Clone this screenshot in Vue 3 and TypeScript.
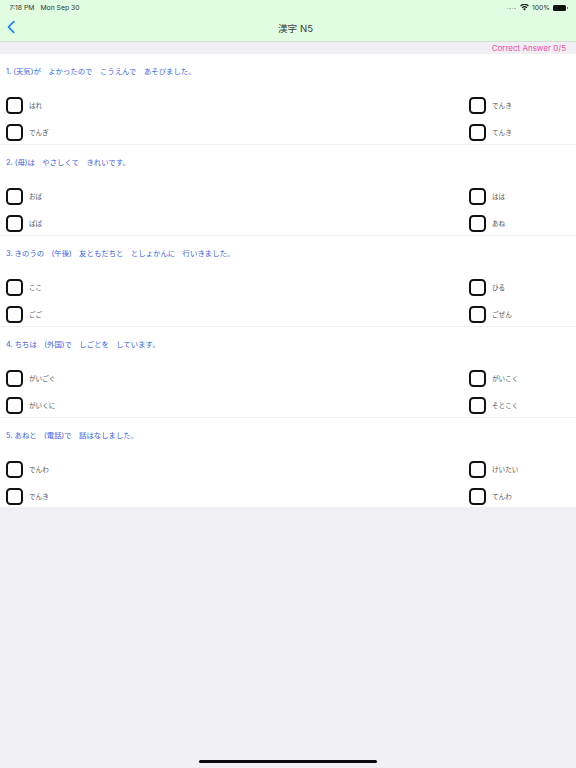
<script setup lang="ts">
interface Question {
  text: string
  options: string[]
}

const questions: Question[] = [
  { text: '1. (天気)が　よかったので　こうえんで　あそびました。', options: ['はれ', 'でんき', 'でんぎ', 'てんき'] },
  { text: '2. (母)は　やさしくて　きれいです。', options: ['おば', 'はは', 'ばば', 'あね'] },
  { text: '3. きのうの　(午後)　友ともだちと　としょかんに　行いきました。', options: ['ここ', 'ひる', 'ごご', 'ごぜん'] },
  { text: '4. ちちは　(外国)で　しごとを　しています。', options: ['がいごぐ', 'がいこく', 'がいくに', 'そとこく'] },
  { text: '5. あねと　(電話)で　話はなしました。', options: ['でんわ', 'けいたい', 'でんき', 'てんわ'] },
]
</script>

<template>
  <div class="page">
    <header class="header">
      <div class="status">
        <div class="status-left">
          <span>7:18 PM</span>
          <span>Mon Sep 30</span>
        </div>
        <div class="status-right">
          <span class="signal"><i></i><i></i><i></i><i></i></span>
          <svg class="wifi" viewBox="0 0 16 12" width="9" height="7">
            <path d="M8 11.5 5.6 8.6a3.6 3.6 0 0 1 4.8 0Z" fill="#111" />
            <path d="M4.4 7.2 3 5.5a7.4 7.4 0 0 1 10 0l-1.4 1.7a5.3 5.3 0 0 0-7.2 0Z" fill="#111" />
            <path d="M1.8 4.1.3 2.3a11.6 11.6 0 0 1 15.4 0l-1.5 1.8a9.3 9.3 0 0 0-12.4 0Z" fill="#111" />
          </svg>
          <span>100%</span>
          <span class="battery"></span>
        </div>
      </div>
      <div class="nav">
        <button class="back" aria-label="Back">
          <svg viewBox="0 0 10 16" width="8" height="14">
            <path d="M8.4 1.2 1.8 8l6.6 6.8" fill="none" stroke="#1b84f2" stroke-width="2.2" stroke-linecap="round" stroke-linejoin="round" />
          </svg>
        </button>
        <h1 class="title">漢字 N5</h1>
      </div>
    </header>

    <div class="score">Correct Answer 0/5</div>

    <main class="list">
      <section v-for="q in questions" :key="q.text" class="item">
        <p class="question">{{ q.text }}</p>
        <div class="options">
          <label v-for="opt in q.options" :key="opt" class="option">
            <span class="box"></span>
            <span class="option-text">{{ opt }}</span>
          </label>
        </div>
      </section>
    </main>

    <div class="home-indicator"></div>
  </div>
</template>

<style>
html,
body {
  margin: 0;
  background: #efeff4;
}
</style>

<style scoped>
.page {
  position: relative;
  width: 576px;
  height: 768px;
  overflow: hidden;
  background: #efeff4;
  font-family: "Inter", "Noto Sans CJK JP", sans-serif;
}

.header {
  height: 42px;
  box-sizing: border-box;
  background: #e0fde1;
  border-bottom: 1px solid #d6dcd8;
}

.status {
  height: 14px;
  box-sizing: border-box;
  padding: 1px 10px 0 9.5px;
  display: flex;
  align-items: center;
  justify-content: space-between;
  font-size: 6.8px;
  color: #333;
}

.status-left {
  display: flex;
  gap: 6px;
}

.status-right {
  display: flex;
  align-items: center;
  gap: 3px;
}

.signal {
  display: flex;
  gap: 1px;
  margin-right: 1px;
}

.signal i {
  width: 1.5px;
  height: 1.5px;
  margin-top: 2px;
  border-radius: 50%;
  background: #a9b5ab;
}

.battery {
  position: relative;
  display: block;
  width: 13px;
  height: 6px;
  border-radius: 1.5px;
  background: #111;
}

.battery::after {
  content: "";
  position: absolute;
  right: -1.5px;
  top: 2px;
  width: 1px;
  height: 2px;
  background: #777;
}

.nav {
  position: relative;
  height: 27px;
  display: flex;
  align-items: center;
  justify-content: center;
}

.back {
  position: absolute;
  left: 7px;
  top: 6px;
  display: flex;
  padding: 0;
  border: 0;
  background: none;
}

.title {
  margin: 0;
  padding-left: 15px;
  font-size: 9.6px;
  font-weight: 400;
  color: #3a3a3a;
}

.score {
  height: 12px;
  padding-right: 10px;
  text-align: right;
  font-size: 8px;
  line-height: 12px;
  color: #ee4fa6;
}

.list {
  background: #fff;
}

.item {
  height: 91px;
  box-sizing: border-box;
  border-bottom: 1px solid #f1f1f3;
}

.item:last-child {
  height: 89px;
  border-bottom: 0;
}

.question {
  height: 38px;
  margin: 0;
  padding-left: 6px;
  font-size: 7.4px;
  line-height: 35px;
  color: #3a62e0;
  white-space: pre;
}

.options {
  display: grid;
  grid-template-columns: 463px 1fr;
  grid-auto-rows: 27px;
  padding-left: 6px;
}

.option {
  display: flex;
  align-items: center;
  gap: 6px;
}

.box {
  width: 17px;
  height: 17px;
  box-sizing: border-box;
  border: 2px solid #111;
  border-radius: 4.5px;
}

.option-text {
  padding-bottom: 1px;
  font-size: 6.6px;
  color: #555;
}

.home-indicator {
  position: absolute;
  left: 199px;
  bottom: 5px;
  width: 178px;
  height: 3px;
  border-radius: 2px;
  background: #0c0c0e;
}
</style>
